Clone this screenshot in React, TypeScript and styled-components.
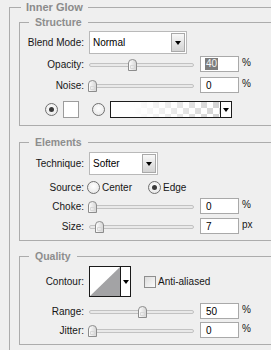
import React from "react";
import styled, { createGlobalStyle } from "styled-components";

const GlobalStyle = createGlobalStyle`
  html, body {
    margin: 0;
    padding: 0;
    background: #efefef;
    overflow: hidden;
  }
  body {
    font-family: "Liberation Sans", Arial, sans-serif;
    font-size: 10px;
    color: #161616;
  }
`;

const Page = styled.div`
  width: 271px;
  height: 350px;
  overflow: hidden;
  background: #efefef;
`;

const Panel = styled.fieldset`
  margin: 0 0 0 9px;
  padding: 0 0 0 9px;
  width: 340px;
  min-height: 400px;
  border: 1px solid #acacac;
  box-sizing: border-box;
`;

const PanelTitle = styled.legend`
  margin-left: 2px;
  padding: 0 5px;
  line-height: 15px;
  font-size: 11px;
  font-weight: bold;
  color: #8b8b8b;
`;

const Group = styled.fieldset<{ $top: number; $pt: number; $pb: number }>`
  margin: ${(p) => p.$top}px 0 0 0;
  padding: ${(p) => p.$pt}px 0 ${(p) => p.$pb}px 0;
  width: 300px;
  border: 1px solid #acacac;
  box-sizing: border-box;
`;

const GroupTitle = styled.legend`
  margin-left: 9px;
  padding: 0 6px;
  line-height: 15px;
  font-size: 10.5px;
  font-weight: bold;
  color: #8d8d8d;
`;

const Row = styled.div<{ $mt?: number; $h: number; $pl?: number }>`
  display: flex;
  align-items: center;
  height: ${(p) => p.$h}px;
  margin-top: ${(p) => p.$mt ?? 0}px;
  padding-left: ${(p) => p.$pl ?? 0}px;
`;

const Label = styled.span`
  width: 64px;
  flex-shrink: 0;
  text-align: right;
  white-space: nowrap;
`;

const Select = styled.div<{ $w: number }>`
  width: ${(p) => p.$w}px;
  height: 23px;
  box-sizing: border-box;
  margin-left: 5px;
  padding: 0 1px 0 3px;
  border: 1px solid #b9b9b9;
  background: #fff;
  display: flex;
  align-items: center;
  justify-content: space-between;
`;

const SelectValue = styled.span`
  color: #000;
`;

const DropButton = styled.div`
  width: 14px;
  height: 19px;
  box-sizing: border-box;
  border: 1px solid #a9a9a9;
  background: linear-gradient(#f8f8f8, #d3d3d3);
  display: flex;
  align-items: center;
  justify-content: center;
`;

const Arrow = styled.span`
  width: 0;
  height: 0;
  border-left: 3.5px solid transparent;
  border-right: 3.5px solid transparent;
  border-top: 4px solid #000;
`;

const SliderBox = styled.div`
  position: relative;
  width: 106px;
  height: 16px;
  margin-left: 4px;
  flex-shrink: 0;
`;

const Track = styled.div`
  position: absolute;
  left: 1px;
  right: 0;
  top: 7px;
  height: 4px;
  box-sizing: border-box;
  border: 1px solid #c2c2c2;
  border-radius: 2px;
  background: #e9e9e9;
`;

const Thumb = styled.svg`
  position: absolute;
  top: 3px;
  width: 9px;
  height: 12px;
`;

const NumInput = styled.div`
  width: 39px;
  height: 16px;
  box-sizing: border-box;
  margin-left: 6px;
  padding-left: 5px;
  border: 1px solid #a9a9a9;
  background: #fff;
  display: flex;
  align-items: center;
  flex-shrink: 0;
  color: #000;
`;

const Selected = styled.span`
  background: #7d7d7d;
  color: #f4f4f4;
  padding: 0 1px;
  margin-left: -1px;
  line-height: 12px;
`;

const Unit = styled.span`
  margin-left: 3px;
  align-self: flex-start;
  margin-top: 1px;
`;

const Radio = styled.span<{ $on?: boolean }>`
  width: 13px;
  height: 13px;
  box-sizing: border-box;
  border-radius: 50%;
  border: 1px solid #707070;
  background: radial-gradient(circle at 50% 40%, #ffffff, #e2e2e2);
  display: flex;
  align-items: center;
  justify-content: center;
  flex-shrink: 0;
  &::after {
    content: "";
    display: ${(p) => (p.$on ? "block" : "none")};
    width: 5px;
    height: 5px;
    border-radius: 50%;
    background: #3a3a3a;
  }
`;

const Swatch = styled.span`
  width: 16px;
  height: 17px;
  box-sizing: border-box;
  margin-left: 5px;
  border: 1px solid #9c9c9c;
  background: #fff;
`;

const GradientBox = styled.div`
  width: 122px;
  height: 17px;
  box-sizing: border-box;
  margin-left: 5px;
  border: 1px solid #1c1c1c;
  display: flex;
`;

const GradientFill = styled.div`
  flex: 1;
  background:
    linear-gradient(to right, #ffffff 20%, rgba(255, 255, 255, 0) 100%),
    repeating-conic-gradient(#d2d2d2 0% 25%, #ffffff 0% 50%) 0 0 / 12px 12px;
`;

const GradientArrow = styled.div`
  width: 10px;
  border-left: 1px solid #1c1c1c;
  background: #fff;
  display: flex;
  align-items: center;
  justify-content: center;
`;

const OptionText = styled.span<{ $ml?: number }>`
  margin-left: ${(p) => p.$ml ?? 2}px;
`;

const SourceRadio = styled(Radio)<{ $ml: number }>`
  margin-left: ${(p) => p.$ml}px;
`;

const ContourBox = styled.div`
  width: 42px;
  height: 31px;
  box-sizing: border-box;
  margin-left: 5px;
  border: 1px solid #1a1a1a;
  display: flex;
  background: #fff;
`;

const ContourPreview = styled.svg`
  width: 30px;
  height: 29px;
  display: block;
`;

const ContourArrow = styled.div`
  flex: 1;
  border-left: 1px solid #1a1a1a;
  display: flex;
  align-items: center;
  justify-content: center;
`;

const Checkbox = styled.span`
  width: 12px;
  height: 12px;
  box-sizing: border-box;
  margin-left: 13px;
  border: 1px solid #8e8e8e;
  background: linear-gradient(135deg, #dcdcdc, #fbfbfb);
  flex-shrink: 0;
`;

function Slider({ value }: { value: number }) {
  const left = 4 + value * 1.01 - 4.5;
  return (
    <SliderBox>
      <Track />
      <Thumb viewBox="0 0 9 12" style={{ left }}>
        <defs>
          <linearGradient id="thumbFill" x1="0" x2="1" y1="0" y2="0">
            <stop offset="0" stopColor="#ffffff" />
            <stop offset="1" stopColor="#d4d4d4" />
          </linearGradient>
        </defs>
        <path
          d="M0.5 11.5 V4 Q0.5 0.5 4.5 0.5 Q8.5 0.5 8.5 4 V11.5 Z"
          fill="url(#thumbFill)"
          stroke="#8c8c8c"
        />
        <path d="M2.5 6.5 H6.5 V9.5 H2.5 Z" fill="none" stroke="#d8d8d8" />
      </Thumb>
    </SliderBox>
  );
}

function SliderRow({
  label,
  value,
  text,
  unit,
  mt,
  selected,
}: {
  label: string;
  value: number;
  text: string;
  unit: string;
  mt: number;
  selected?: boolean;
}) {
  return (
    <Row $h={16} $mt={mt}>
      <Label>{label}</Label>
      <Slider value={value} />
      <NumInput>{selected ? <Selected>{text}</Selected> : text}</NumInput>
      <Unit>{unit}</Unit>
    </Row>
  );
}

export default function App() {
  return (
    <Page>
      <GlobalStyle />
      <Panel>
        <PanelTitle>Inner Glow</PanelTitle>

        <Group $top={0} $pt={1} $pb={7}>
          <GroupTitle>Structure</GroupTitle>
          <Row $h={23}>
            <Label>Blend Mode:</Label>
            <Select $w={98}>
              <SelectValue>Normal</SelectValue>
              <DropButton>
                <Arrow />
              </DropButton>
            </Select>
          </Row>
          <SliderRow label="Opacity:" value={40} text="40" unit="%" mt={2} selected />
          <SliderRow label="Noise:" value={0} text="0" unit="%" mt={5} />
          <Row $h={17} $mt={8} $pl={25}>
            <Radio $on />
            <Swatch />
            <SourceRadio $ml={13} />
            <GradientBox>
              <GradientFill />
              <GradientArrow>
                <Arrow />
              </GradientArrow>
            </GradientBox>
          </Row>
        </Group>

        <Group $top={9} $pt={2} $pb={6}>
          <GroupTitle>Elements</GroupTitle>
          <Row $h={23}>
            <Label>Technique:</Label>
            <Select $w={69}>
              <SelectValue>Softer</SelectValue>
              <DropButton>
                <Arrow />
              </DropButton>
            </Select>
          </Row>
          <Row $h={15} $mt={5}>
            <Label>Source:</Label>
            <SourceRadio $ml={3} />
            <OptionText>Center</OptionText>
            <SourceRadio $ml={16} $on />
            <OptionText>Edge</OptionText>
          </Row>
          <SliderRow label="Choke:" value={0} text="0" unit="%" mt={3} />
          <SliderRow label="Size:" value={7} text="7" unit="px" mt={4} />
        </Group>

        <Group $top={8} $pt={2} $pb={6}>
          <GroupTitle>Quality</GroupTitle>
          <Row $h={31}>
            <Label>Contour:</Label>
            <ContourBox>
              <ContourPreview viewBox="0 0 30 29">
                <rect width="30" height="29" fill="#ffffff" />
                <polygon points="0,29 30,0 30,29" fill="#a3a3a5" />
              </ContourPreview>
              <ContourArrow>
                <Arrow />
              </ContourArrow>
            </ContourBox>
            <Checkbox />
            <OptionText>Anti-aliased</OptionText>
          </Row>
          <SliderRow label="Range:" value={50} text="50" unit="%" mt={6} />
          <SliderRow label="Jitter:" value={0} text="0" unit="%" mt={3} />
        </Group>
      </Panel>
    </Page>
  );
}
